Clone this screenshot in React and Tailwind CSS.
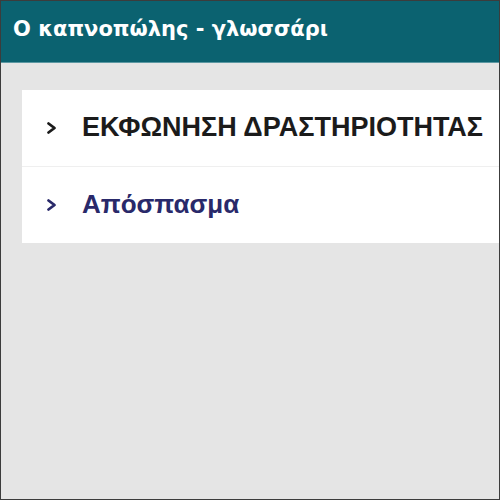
export default function App() {
  const Chevron = ({ color }) => (
    <svg width="12" height="14" viewBox="0 0 12 14" className="shrink-0">
      <polyline points="2.5,2.5 8.5,7 2.5,11.5" fill="none" stroke={color} strokeWidth="2.8" strokeLinecap="round" strokeLinejoin="round" />
    </svg>
  );
  return (
    <div className="w-[500px] h-[500px] box-border border border-[#3c3c3c] bg-[#e5e5e5] flex flex-col overflow-hidden">
      <div className="h-[62px] shrink-0 bg-[#0b6270] border-b border-[#5c98a2] flex items-center pl-[12px] pb-[4px]">
        <span className="text-white font-bold text-[21px]" style={{ fontFamily: '"DejaVu Sans", Verdana, sans-serif' }}>
          Ο καπνοπώλης - γλωσσάρι
        </span>
      </div>
      <div className="ml-[21px] mt-[27px] bg-white flex flex-col" style={{ fontFamily: '"Liberation Sans", Arial, sans-serif' }}>
        <div className="h-[77px] flex items-center border-b border-[#efefef] pl-[24px]">
          <Chevron color="#1b1b1b" />
          <span className="ml-[24px] font-bold text-[27px] text-[#1b1b1b] leading-none pb-[2px]">ΕΚΦΩΝΗΣΗ ΔΡΑΣΤΗΡΙΟΤΗΤΑΣ</span>
        </div>
        <div className="h-[76px] flex items-center pl-[24px]">
          <Chevron color="#29296a" />
          <span className="ml-[24px] font-bold text-[26px] text-[#29296a] leading-none pb-[2px]">Απόσπασμα</span>
        </div>
      </div>
    </div>
  );
}
